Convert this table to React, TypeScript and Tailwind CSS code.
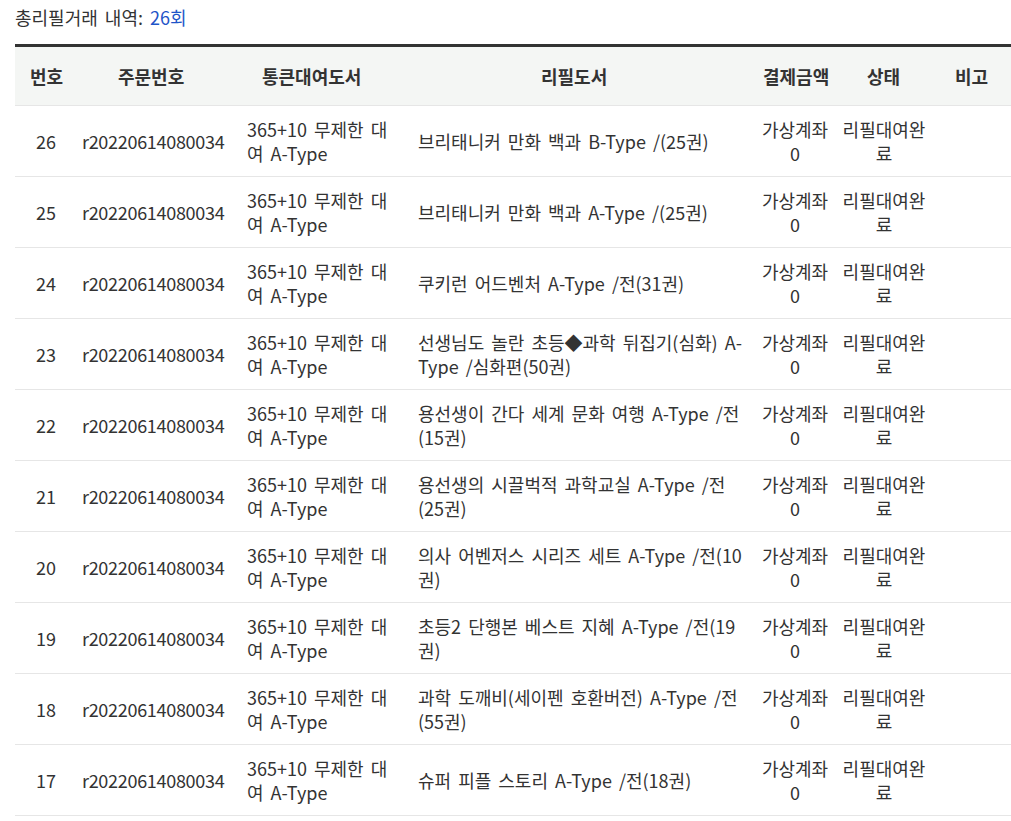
import React from "react";

const rows: { no: number; refill: string[] }[] = [
  { no: 26, refill: ["브리태니커 만화 백과 B-Type /(25권)"] },
  { no: 25, refill: ["브리태니커 만화 백과 A-Type /(25권)"] },
  { no: 24, refill: ["쿠키런 어드벤처 A-Type /전(31권)"] },
  { no: 23, refill: ["선생님도 놀란 초등◆과학 뒤집기(심화) A-", "Type /심화편(50권)"] },
  { no: 22, refill: ["용선생이 간다 세계 문화 여행 A-Type /전", "(15권)"] },
  { no: 21, refill: ["용선생의 시끌벅적 과학교실 A-Type /전", "(25권)"] },
  { no: 20, refill: ["의사 어벤저스 시리즈 세트 A-Type /전(10", "권)"] },
  { no: 19, refill: ["초등2 단행본 베스트 지혜 A-Type /전(19", "권)"] },
  { no: 18, refill: ["과학 도깨비(세이펜 호환버전) A-Type /전", "(55권)"] },
  { no: 17, refill: ["슈퍼 피플 스토리 A-Type /전(18권)"] },
];

function Lines({ lines }: { lines: string[] }) {
  return (
    <>
      {lines.map((l, i) => (
        <div key={i} className="whitespace-nowrap">
          {l}
        </div>
      ))}
    </>
  );
}

export default function App() {
  return (
    <div
      className="h-[821px] w-full overflow-hidden bg-white pl-[15px] text-[18px] leading-[24px] text-[#333333] [word-spacing:3px]"
      style={{ fontFamily: '"Noto Sans CJK KR", "Noto Sans", sans-serif' }}
    >
      <div className="pt-[5px]">
        총리필거래 내역: <span className="text-[#1f55c8]">26회</span>
      </div>
      <table className="mt-[15px] w-[1000px] table-fixed border-collapse">
        <colgroup>
          <col className="w-[62px]" />
          <col className="w-[165px]" />
          <col className="w-[171px]" />
          <col className="w-[344px]" />
          <col className="w-[76px]" />
          <col className="w-[102px]" />
          <col className="w-[80px]" />
        </colgroup>
        <thead>
          <tr className="border-t-[3px] border-b border-t-[#333333] border-b-[#e6e6e6] bg-[#f4f6f4] text-[18px]">
            <th className="py-[17px] pl-[15px] text-left font-bold whitespace-nowrap">번호</th>
            <th className="py-[17px] pl-[41px] text-left font-bold whitespace-nowrap">주문번호</th>
            <th className="py-[17px] pl-[20px] text-left font-bold whitespace-nowrap">통큰대여도서</th>
            <th className="py-[17px] pl-[128px] text-left font-bold whitespace-nowrap">리필도서</th>
            <th className="py-[17px] pl-[6px] text-left font-bold whitespace-nowrap">결제금액</th>
            <th className="py-[17px] pl-[34px] text-left font-bold whitespace-nowrap">상태</th>
            <th className="py-[17px] pl-[20px] text-left font-bold whitespace-nowrap">비고</th>
          </tr>
        </thead>
        <tbody>
          {rows.map((r) => (
            <tr key={r.no} className="border-b border-[#e6e6e6]">
              <td className="py-[11px] text-center align-middle">{r.no}</td>
              <td className="px-[5px] py-[11px] text-left align-middle tracking-[-0.3px]">r20220614080034</td>
              <td className="px-[5px] py-[11px] text-left align-middle">
                <Lines lines={["365+10 무제한 대", "여 A-Type"]} />
              </td>
              <td className="px-[5px] py-[11px] text-left align-middle">
                <Lines lines={r.refill} />
              </td>
              <td className="py-[11px] text-center align-middle">
                <Lines lines={["가상계좌", "0"]} />
              </td>
              <td className="py-[11px] text-center align-middle">
                <Lines lines={["리필대여완", "료"]} />
              </td>
              <td className="py-[11px] align-middle"></td>
            </tr>
          ))}
        </tbody>
      </table>
    </div>
  );
}
